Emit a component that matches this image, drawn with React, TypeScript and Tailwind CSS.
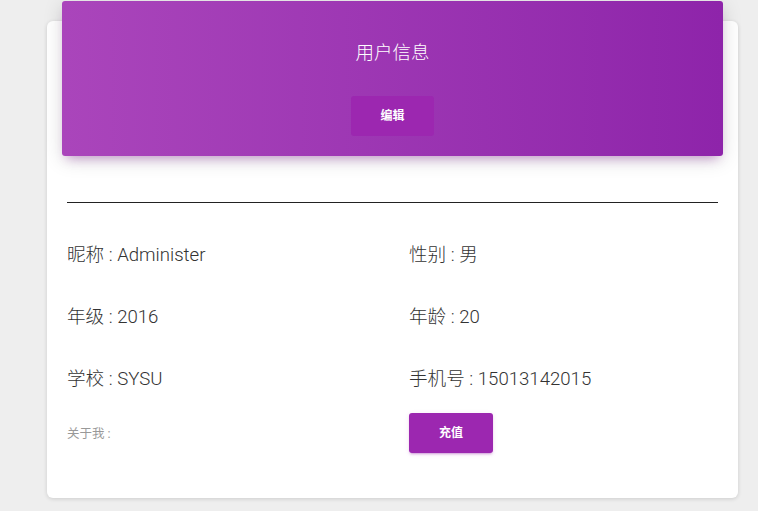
export default function App() {
  const rows = [
    ["昵称", "Administer", "性别", "男"],
    ["年级", "2016", "年龄", "20"],
    ["学校", "SYSU", "手机号", "15013142015"],
  ];

  return (
    <div
      className="min-h-[511px] w-full bg-[#eeeeee] pt-[21px] pl-[47px]"
      style={{ fontFamily: 'Roboto, "Noto Sans CJK SC", sans-serif' }}
    >
      <div className="flow-root w-[691px] h-[477px] bg-white rounded-[6px] shadow-[0_1px_4px_0_rgba(0,0,0,0.14)]">
        {/* header */}
        <div className="-mt-5 mx-[15px] h-[155px] rounded-[3px] bg-linear-to-r from-[#aa45bb] to-[#8e24aa] shadow-[0_4px_20px_0_rgba(0,0,0,0.14),0_7px_10px_-5px_rgba(156,39,176,0.4)] flex flex-col items-center pt-[40px]">
          <h4 className="text-[18.5px] leading-6 font-light text-white">用户信息</h4>
          <button className="mt-[31px] w-[83px] h-[40px] rounded-[3px] bg-[#9c27b0] text-white text-[12px] font-bold">
            编辑
          </button>
        </div>

        {/* body */}
        <div className="px-5 pt-[46px]">
          <div className="h-px bg-[#222222]" />
          <div className="mt-[22px]">
            {rows.map((r, i) => (
              <div key={i} className="grid grid-cols-[342px_1fr] h-[62px] items-center text-[18.6px] font-light text-[#333333]">
                <div>
                  {r[0]} : {r[1]}
                </div>
                <div>
                  {r[2]} : {r[3]}
                </div>
              </div>
            ))}
            <div className="grid grid-cols-[342px_1fr] items-center mt-[2px]">
              <div className="pt-[3px] text-[12.5px] text-[#999999]">关于我 :</div>
              <div>
                <button className="w-[84px] h-[40px] rounded-[3px] bg-[#9c27b0] text-white text-[12px] font-bold shadow-[0_2px_2px_0_rgba(156,39,176,0.14),0_3px_1px_-2px_rgba(156,39,176,0.2),0_1px_5px_0_rgba(156,39,176,0.12)]">
                  充值
                </button>
              </div>
            </div>
          </div>
        </div>
      </div>
    </div>
  );
}
